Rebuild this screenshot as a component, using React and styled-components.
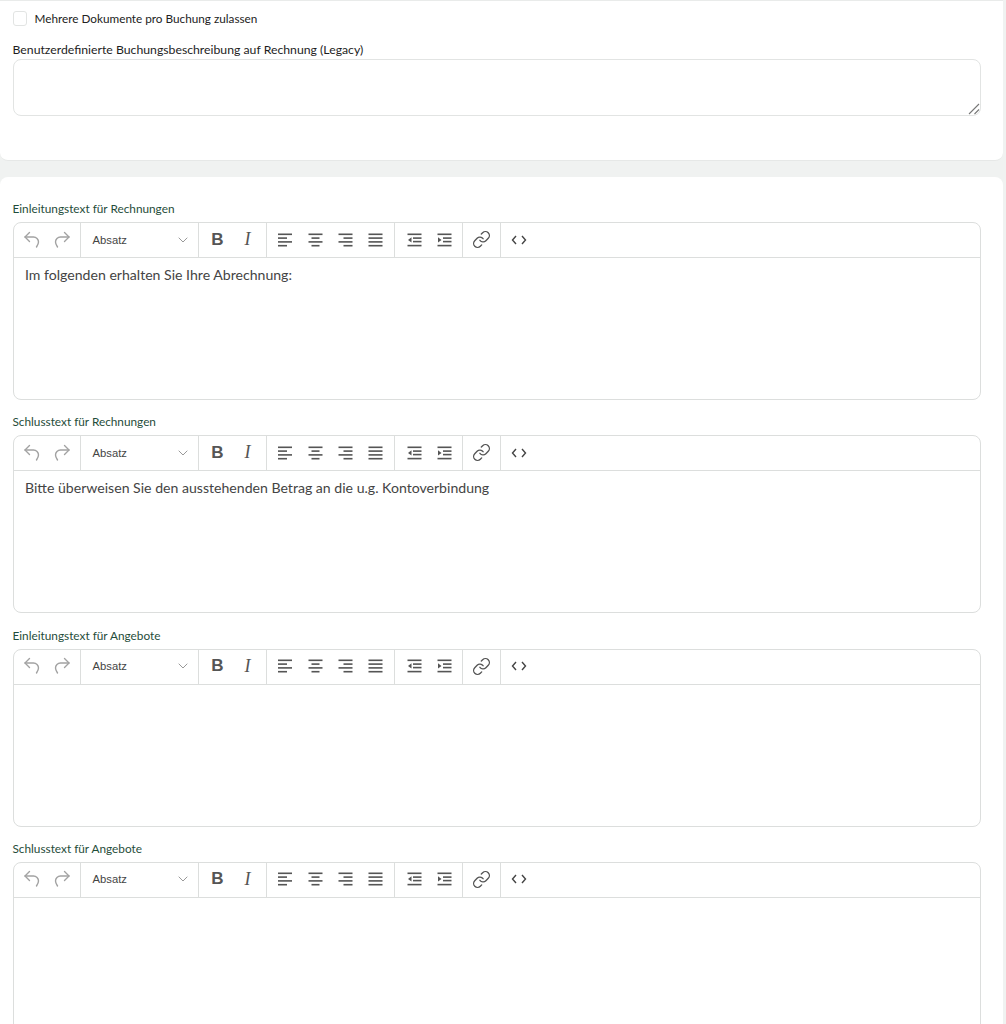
import React from 'react';
import styled, { createGlobalStyle } from 'styled-components';

const Global = createGlobalStyle`
  html, body { margin: 0; padding: 0; height: 1024px; overflow: hidden; background: #f0f2f1; }
  * { box-sizing: border-box; }
`;
const Page = styled.div`
  width: 1003px;
  display: flex;
  flex-direction: column;
  gap: 16px;
  font-family: "Lato", "Noto Sans", sans-serif;
`;
const Card = styled.section`
  background: #fff;
  border-radius: 0 0 8px 8px;
  border-top: 1px solid #e9ebea;
  border-bottom: 1px solid #e6e8e7;
  height: 161px;
  padding: 9px 22px 0 12.5px;
`;
const EditorCard = styled.section`
  background: #fff;
  border-radius: 8px 8px 0 0;
  padding: 24px 22px 0 12.5px;
  display: flex;
  flex-direction: column;
  gap: 5px;
`;
const CheckRow = styled.label`
  display: flex;
  align-items: center;
  gap: 8px;
  height: 16px;
  font-size: 11.75px;
  color: #222;
`;
const Check = styled.span`
  width: 14px;
  height: 15px;
  border: 1px solid #e2e4e3;
  border-radius: 3px;
  background: #fff;
`;
const BlackLabel = styled.div`
  font-size: 12.25px;
  line-height: 16px;
  color: #1d1d1d;
  margin-top: 16px;
  margin-bottom: 1px;
`;
const TextAreaWrap = styled.div`
  position: relative;
  height: 57px;
`;
const TextArea = styled.textarea`
  display: block;
  width: 100%;
  height: 100%;
  border: 1px solid #e2e4e3;
  border-radius: 8px;
  background: #fff;
  outline: none;
  resize: none;
`;
const Grip = styled.svg`
  position: absolute;
  right: 1px;
  bottom: 1px;
  pointer-events: none;
`;
const GreenLabel = styled.div`
  font-size: 11.8px;
  line-height: 16px;
  color: #1f4d3a;
  margin-top: ${p => (p.$first ? 0 : 9.33)}px;
`;
const Editor = styled.div`
  border: 1px solid #dcdedd;
  border-radius: 8px;
  background: #fff;
  overflow: hidden;
  height: ${p => p.$height}px;
  flex: none;
`;
const Toolbar = styled.div`
  display: flex;
  height: 35px;
  border-bottom: 1px solid #dcdedd;
`;
const Group = styled.div`
  display: flex;
  align-items: center;
  width: ${p => p.$w}px;
  padding-left: ${p => p.$pad ?? 8}px;
  padding-bottom: 1px;
  border-right: ${p => (p.$last ? 'none' : '1px solid #dcdedd')};
`;
const ToolBtn = styled.span`
  display: flex;
  align-items: center;
  justify-content: center;
  width: ${p => p.$w ?? 30}px;
  height: 33px;
  flex: none;
  color: ${p => (p.$muted ? '#a2a2a2' : '#555')};
`;
const SelectText = styled.span`
  font-family: "Liberation Sans", Arial, sans-serif;
  font-size: 11.25px;
  color: #444;
  flex: 1;
`;
const BoldGlyph = styled.span`
  font-family: "Liberation Sans", Arial, sans-serif;
  font-weight: 700;
  font-size: 17px;
  color: #555;
`;
const ItalicGlyph = styled.span`
  font-family: "Liberation Serif", serif;
  font-style: italic;
  font-size: 18px;
  color: #555;
`;
const Content = styled.div`
  padding: 8px 11.5px;
  font-size: 14.1px;
  line-height: 18px;
  color: #444;
`;

const Svg = ({ children }) => (
  <svg width="18" height="18" viewBox="0 0 18 18" fill="none" stroke="currentColor" strokeWidth="1.4" strokeLinecap="round" strokeLinejoin="round">{children}</svg>
);
const Undo = () => <Svg><path d="M6.5 1.5 2 6l4.5 4.5" /><path d="M2 6h8.5a5 5 0 0 1 5 5c0 2-1 3.5-2 5" /></Svg>;
const Redo = () => <Svg><path d="M11.5 1.5 16 6l-4.5 4.5" /><path d="M16 6H7.5a5 5 0 0 0-5 5c0 2 1 3.5 2 5" /></Svg>;
const Chevron = () => <svg width="10" height="6" viewBox="0 0 10 6" fill="none" stroke="#999" strokeWidth="1"><path d="m.7.7 4.3 4.3L9.3.7" /></svg>;
const Lines = ({ rows }) => (
  <svg width="15" height="14" viewBox="0 0 15 14" fill="#555">
    {rows.map(([x, w], i) => <rect key={i} x={x} y={0.5 + i * 3.8} width={w} height="1.6" />)}
  </svg>
);
const Indent = ({ flip }) => (
  <svg width="15" height="14" viewBox="0 0 15 14" fill="#555">
    <rect x="0.5" y="0.5" width="14" height="1.6" />
    <rect x="6" y="4.3" width="8.5" height="1.6" />
    <rect x="6" y="7.8" width="8.5" height="1.6" />
    <rect x="0.5" y="11.8" width="14" height="1.6" />
    <path d={flip ? 'M1 4.3 4.5 6.9 1 9.5z' : 'M4.5 4.3 1 6.9l3.5 2.6z'} />
  </svg>
);
const LinkIcon = () => (
  <svg width="19" height="19" viewBox="0 0 24 24" fill="none" stroke="#555" strokeWidth="1.7" strokeLinecap="round" strokeLinejoin="round">
    <path d="M10 13a5 5 0 0 0 7.54.54l3-3a5 5 0 0 0-7.07-7.07l-1.72 1.71" />
    <path d="M14 11a5 5 0 0 0-7.54-.54l-3 3a5 5 0 0 0 7.07 7.07l1.71-1.71" />
  </svg>
);
const Code = () => (
  <svg width="16" height="10" viewBox="0 0 16 10" fill="none" stroke="#444" strokeWidth="1.4"><path d="M5 1 1.5 5 5 9" /><path d="M11 1l3.5 4L11 9" /></svg>
);

const RichEditor = ({ text, height = 178 }) => (
  <Editor $height={height}>
    <Toolbar>
      <Group $w={67} $pad={3}>
        <ToolBtn $muted><Undo /></ToolBtn>
        <ToolBtn $muted><Redo /></ToolBtn>
      </Group>
      <Group $w={118} $pad={12}>
        <SelectText>Absatz</SelectText>
        <ToolBtn $w={30}><Chevron /></ToolBtn>
      </Group>
      <Group $w={68} $pad={4}>
        <ToolBtn><BoldGlyph>B</BoldGlyph></ToolBtn>
        <ToolBtn><ItalicGlyph>I</ItalicGlyph></ToolBtn>
      </Group>
      <Group $w={128} $pad={4}>
        <ToolBtn><Lines rows={[[0, 14], [0, 9], [0, 14], [0, 9]]} /></ToolBtn>
        <ToolBtn><Lines rows={[[0.5, 14], [3.5, 8], [0.5, 14], [3.5, 8]]} /></ToolBtn>
        <ToolBtn><Lines rows={[[0.5, 14], [5.5, 9], [0.5, 14], [5.5, 9]]} /></ToolBtn>
        <ToolBtn><Lines rows={[[0.5, 14], [0.5, 14], [0.5, 14], [0.5, 14]]} /></ToolBtn>
      </Group>
      <Group $w={68} $pad={5}>
        <ToolBtn><Indent /></ToolBtn>
        <ToolBtn><Indent flip /></ToolBtn>
      </Group>
      <Group $w={38} $pad={4}>
        <ToolBtn><LinkIcon /></ToolBtn>
      </Group>
      <Group $w={38} $pad={3} $last>
        <ToolBtn><Code /></ToolBtn>
      </Group>
    </Toolbar>
    <Content>{text}</Content>
  </Editor>
);

export default function App() {
  return (
    <Page>
      <Global />
      <Card>
        <CheckRow><Check />Mehrere Dokumente pro Buchung zulassen</CheckRow>
        <BlackLabel>Benutzerdefinierte Buchungsbeschreibung auf Rechnung (Legacy)</BlackLabel>
        <TextAreaWrap>
          <TextArea />
          <Grip width="12" height="12" viewBox="0 0 12 12" fill="none" stroke="#777" strokeWidth="1.1">
            <path d="M1 11 11 1" />
            <path d="M6.5 11 11 6.5" />
          </Grip>
        </TextAreaWrap>
      </Card>
      <EditorCard>
        <GreenLabel $first>Einleitungstext für Rechnungen</GreenLabel>
        <RichEditor text="Im folgenden erhalten Sie Ihre Abrechnung:" />
        <GreenLabel>Schlusstext für Rechnungen</GreenLabel>
        <RichEditor text="Bitte überweisen Sie den ausstehenden Betrag an die u.g. Kontoverbindung" />
        <GreenLabel>Einleitungstext für Angebote</GreenLabel>
        <RichEditor />
        <GreenLabel>Schlusstext für Angebote</GreenLabel>
        <RichEditor />
      </EditorCard>
    </Page>
  );
}
